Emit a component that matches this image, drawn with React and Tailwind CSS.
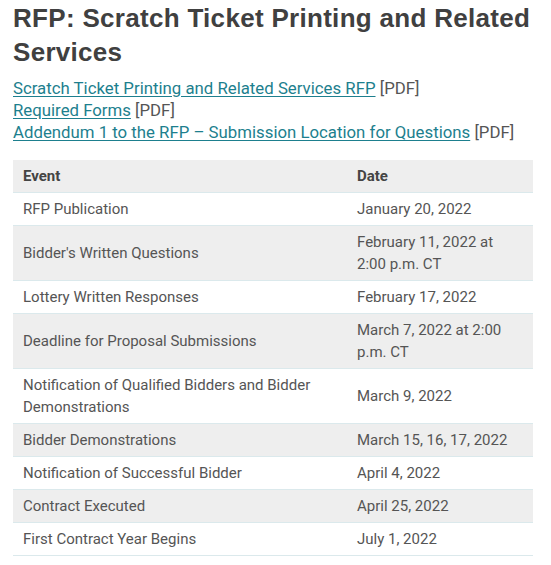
import React from 'react'

const rows = [
  ['RFP Publication', 'January 20, 2022'],
  ["Bidder's Written Questions", 'February 11, 2022 at 2:00 p.m. CT'],
  ['Lottery Written Responses', 'February 17, 2022'],
  ['Deadline for Proposal Submissions', 'March 7, 2022 at 2:00 p.m. CT'],
  ['Notification of Qualified Bidders and Bidder Demonstrations', 'March 9, 2022'],
  ['Bidder Demonstrations', 'March 15, 16, 17, 2022'],
  ['Notification of Successful Bidder', 'April 4, 2022'],
  ['Contract Executed', 'April 25, 2022'],
  ['First Contract Year Begins', 'July 1, 2022'],
]

const links = [
  'Scratch Ticket Printing and Related Services RFP',
  'Required Forms',
  'Addendum 1 to the RFP – Submission Location for Questions',
]

const App = () => {
  return (
    <div className="bg-white min-h-[565px] px-[13px] pt-[1px]" style={{ fontFamily: 'Roboto, sans-serif' }}>
      <div className="w-[520px]">
        <h1
          className="w-[530px] text-[26px] leading-[34px] font-bold text-[#404040] tracking-[0.3px]"
          style={{ fontFamily: '"Liberation Sans", Arial, sans-serif' }}
        >
          RFP: Scratch Ticket Printing and Related Services
        </h1>

        <div className="mt-[8px] text-[16.8px] leading-[22px] text-[#555]">
          {links.map((l) => (
            <div key={l}>
              <a href="#" className="text-[#1d7f8e] underline underline-offset-2">{l}</a> [PDF]
            </div>
          ))}
        </div>

        <table className="mt-[17px] w-full text-[15px] leading-[22px] text-[#555] border-collapse">
          <thead>
            <tr className="bg-[#eeeeee] border-b border-[#dbe9ec]">
              <th className="text-left font-bold text-[#444] py-[5px] pl-[10px] w-[344px]">Event</th>
              <th className="text-left font-bold text-[#444] py-[5px] pl-0">Date</th>
            </tr>
          </thead>
          <tbody>
            {rows.map(([ev, date], i) => (
              <tr key={ev} className={`border-b border-[#dbe9ec] ${i % 2 === 1 ? 'bg-[#eeeeee]' : 'bg-white'}`}>
                <td className="py-[5px] pl-[10px] pr-[20px] align-middle">{ev}</td>
                <td className="py-[5px] pr-[20px] align-middle">{date}</td>
              </tr>
            ))}
          </tbody>
        </table>
      </div>
    </div>
  )
}

export default App
